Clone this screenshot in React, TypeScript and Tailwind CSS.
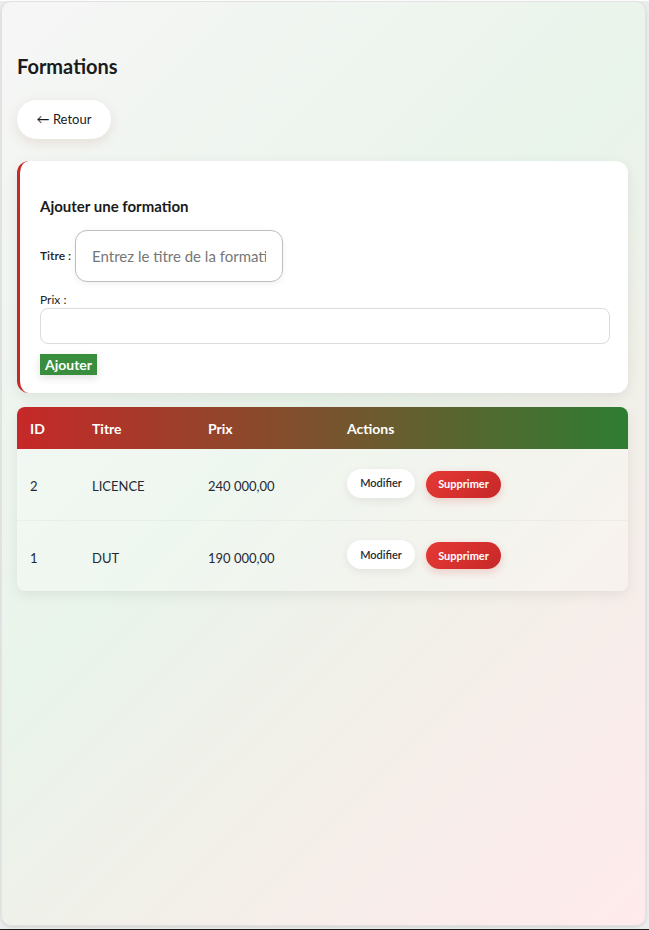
import { useState } from "react";

type Formation = { id: number; titre: string; prix: string };

const FORMATIONS: Formation[] = [
  { id: 2, titre: "LICENCE", prix: "240 000,00" },
  { id: 1, titre: "DUT", prix: "190 000,00" },
];

export default function App() {
  const [titre, setTitre] = useState("");
  const [prix, setPrix] = useState("");

  return (
    <div className="min-h-[930px] bg-[#ececec] border-b-2 border-[#1a1a1a] font-['Lato',sans-serif] text-[#222]">
      <div className="mx-px mt-px h-[925px] w-[645px] rounded-[10px] border border-[#e2e2e2] bg-[linear-gradient(135deg,#f6f6f6_0%,#e9f4ea_45%,#f3efe9_70%,#ffeaec_100%)] pl-[15px] pt-[50px] shadow-[0_1px_3px_rgba(0,0,0,0.12)]">
        <h1 className="text-[20px] font-bold leading-7 text-[#1b1b1b]">Formations</h1>

        <button className="mt-[20px] h-[39px] w-[94px] rounded-full bg-white text-[13px] text-[#1b1b1b] shadow-[0_4px_12px_rgba(180,120,100,0.18)]">
          ← Retour
        </button>

        {/* formulaire d'ajout */}
        <div className="mt-[22px] w-[611px] rounded-xl border-l-[3px] border-[#c62828] bg-white px-5 pb-[18px] pt-[35px] shadow-[0_4px_14px_rgba(0,0,0,0.08)]">
          <h2 className="text-[15px] font-bold leading-5 text-[#1b1b1b]">Ajouter une formation</h2>

          <div className="mt-[14px] flex items-center gap-1">
            <label className="text-[12px] font-semibold text-[#222]">Titre :</label>
            <input
              value={titre}
              onChange={(e) => setTitre(e.target.value)}
              placeholder="Entrez le titre de la formation"
              className="h-[52px] w-[208px] rounded-xl border border-[#bdbdbd] bg-white px-4 text-[15px] text-[#333] placeholder:text-[#777] shadow-[0_2px_6px_rgba(0,0,0,0.06)] outline-none"
            />
          </div>

          <div className="mt-[10px]">
            <label className="block text-[12px] leading-4 text-[#222]">Prix :</label>
            <input
              value={prix}
              onChange={(e) => setPrix(e.target.value)}
              className="h-9 w-[570px] rounded-lg border border-[#dcdcdc] bg-white px-3 text-[14px] outline-none"
            />
          </div>

          <button className="mt-[10px] block h-[21px] bg-[#388e3c] px-[5px] text-[14px] font-bold leading-[21px] text-white shadow-[0_3px_8px_rgba(0,0,0,0.12)]">
            Ajouter
          </button>
        </div>

        {/* liste */}
        <div className="mt-[14px] w-[611px] overflow-hidden rounded-lg bg-[rgba(255,255,255,0.25)] shadow-[0_4px_14px_rgba(0,0,0,0.07)]">
          <table className="w-full table-fixed border-collapse text-left">
            <thead>
              <tr className="h-[42px] bg-[linear-gradient(90deg,#c62828,#2e7d32)] text-[14px] font-bold text-white">
                <th className="w-[62px] pl-[13px] font-bold">ID</th>
                <th className="w-[116px] pl-[13px] font-bold">Titre</th>
                <th className="w-[139px] pl-[13px] font-bold">Prix</th>
                <th className="pl-[13px] font-bold">Actions</th>
              </tr>
            </thead>
            <tbody>
              {FORMATIONS.map((f, i) => (
                <tr
                  key={f.id}
                  className={`h-[71px] text-[13px] text-[#1f2a33] ${i === 0 ? "border-b border-[rgba(0,0,0,0.03)]" : ""}`}
                >
                  <td className="pl-[13px] pt-[5px]">{f.id}</td>
                  <td className="pl-[13px] pt-[5px]">{f.titre}</td>
                  <td className="pl-[13px] pt-[5px]">{f.prix}</td>
                  <td className="pl-[13px]">
                    <div className="flex items-center gap-[11px]">
                      <button className="-mt-0.5 h-[29px] w-[68px] rounded-full bg-white text-[11px] font-semibold text-[#1f2a33] shadow-[0_3px_10px_rgba(0,0,0,0.07)]">
                        Modifier
                      </button>
                      <button className="h-[27px] w-[75px] rounded-full bg-[linear-gradient(135deg,#e53935,#c62828)] text-[11px] font-bold text-white shadow-[0_3px_10px_rgba(198,40,40,0.2)]">
                        Supprimer
                      </button>
                    </div>
                  </td>
                </tr>
              ))}
            </tbody>
          </table>
        </div>
      </div>
    </div>
  );
}
